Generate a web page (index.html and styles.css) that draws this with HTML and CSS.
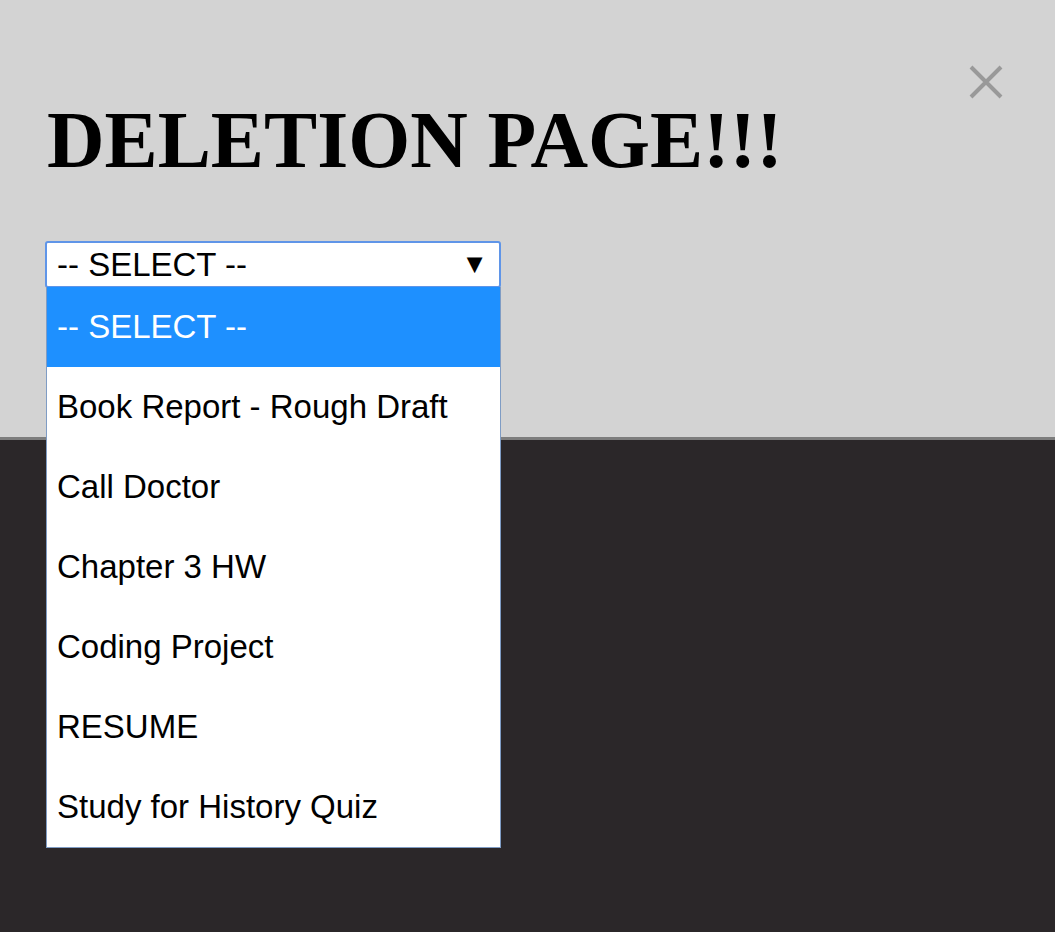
FILE: index.html
```html
<!DOCTYPE html>
<html>
<head>
<meta charset="utf-8">
<link rel="stylesheet" href="styles.css">
</head>
<body>
<div class="panel">
  <button class="close" aria-label="Close">
    <svg width="36" height="36" viewBox="0 0 36 36"><path d="M3 3 L33 33 M33 3 L3 33" stroke="#999999" stroke-width="4" fill="none"/></svg>
  </button>
  <h1 class="title">DELETION PAGE!!!</h1>
  <div class="select-wrap">
    <div class="select">
      <span class="select-text">-- SELECT --</span>
      <span class="arrow">&#9660;</span>
    </div>
    <ul class="dropdown">
      <li class="opt active">-- SELECT --</li>
      <li class="opt">Book Report - Rough Draft</li>
      <li class="opt">Call Doctor</li>
      <li class="opt">Chapter 3 HW</li>
      <li class="opt">Coding Project</li>
      <li class="opt">RESUME</li>
      <li class="opt">Study for History Quiz</li>
    </ul>
  </div>
</div>
<div class="rest"></div>
</body>
</html>
```
FILE: styles.css
```css
html, body {
  margin: 0;
  padding: 0;
  background: #2b2729;
}
body {
  width: 1055px;
  height: 932px;
  overflow: hidden;
}
.panel {
  position: relative;
  box-sizing: border-box;
  height: 440px;
  background: #d3d3d3;
  border-bottom: 3px solid #7d7d7d;
  padding: 100px 0 0 45px;
}
.close {
  position: absolute;
  top: 64px;
  right: 51px;
  width: 36px;
  height: 36px;
  padding: 0;
  border: 0;
  background: none;
}
.close svg { display: block; }
.title {
  margin: 0 0 61px 2px;
  font-family: "Liberation Serif", "Times New Roman", serif;
  font-weight: bold;
  font-size: 79.7px;
  line-height: 80px;
  color: #000;
}
.select-wrap {
  position: relative;
  width: 456px;
  z-index: 2;
}
.select {
  box-sizing: border-box;
  width: 456px;
  height: 47px;
  background: #fff;
  border: 2px solid #5f95e8;
  border-radius: 3px;
  display: flex;
  align-items: center;
  justify-content: space-between;
  padding: 0 11px 0 10px;
  font-family: "Liberation Sans", Arial, sans-serif;
  font-size: 33px;
  color: #000;
}
.select-text { line-height: 1; }
.arrow {
  font-size: 27px;
  line-height: 1;
}
.dropdown {
  position: absolute;
  top: 46px;
  left: 1px;
  box-sizing: border-box;
  width: 455px;
  margin: 0;
  padding: 0;
  list-style: none;
  background: #fff;
  border: 1px solid #7f9cc4;
  border-top: 0;
}
.opt {
  height: 80px;
  display: flex;
  align-items: center;
  padding-left: 10px;
  font-family: "Liberation Sans", Arial, sans-serif;
  font-size: 33px;
  color: #000;
}
.opt.active {
  background: #1e90ff;
  color: #fff;
}
.rest {
  height: 492px;
}
```
